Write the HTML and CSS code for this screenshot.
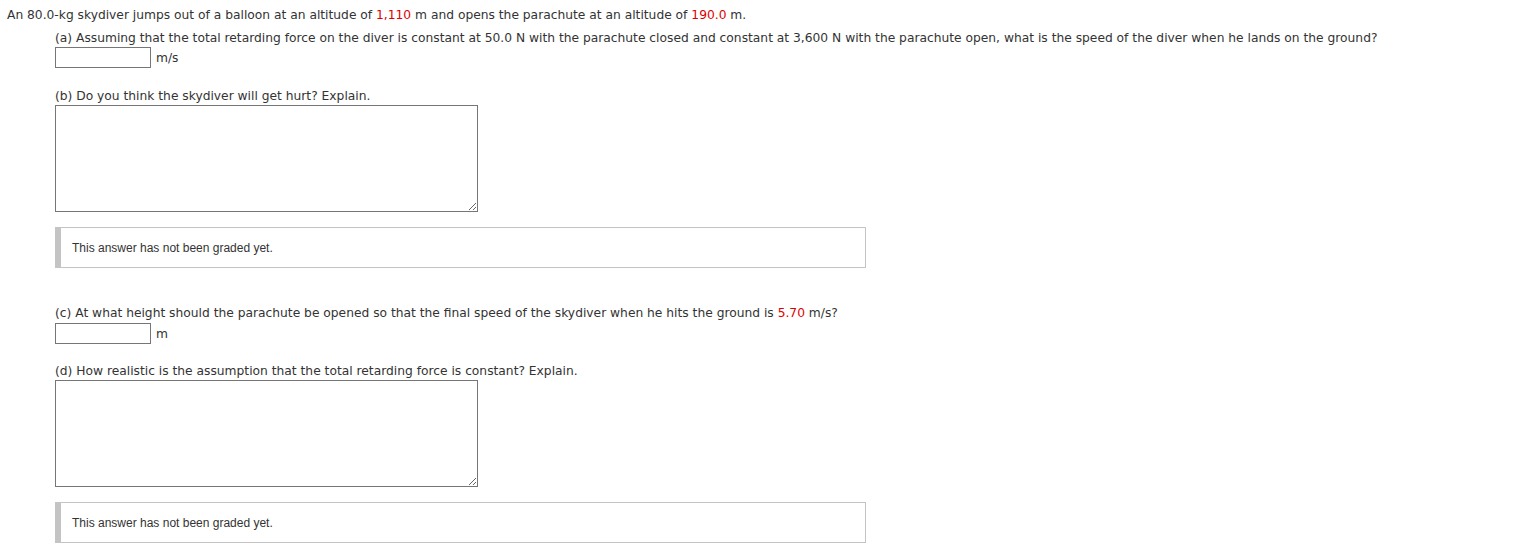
FILE: index.html
```html
<!DOCTYPE html>
<html>
<head>
<meta charset="utf-8">
<link rel="stylesheet" href="styles.css">
</head>
<body>
<div class="stem">An 80.0-kg skydiver jumps out of a balloon at an altitude of <span class="red">1,110</span> m and opens the parachute at an altitude of <span class="red">190.0</span> m.</div>
<div class="parts">
  <div class="q q-a">(a) Assuming that the total retarding force on the diver is constant at 50.0 N with the parachute closed and constant at 3,600 N with the parachute open, what is the speed of the diver when he lands on the ground?</div>
  <div class="ans"><input class="num" type="text"><span class="unit">m/s</span></div>

  <div class="q q-b">(b) Do you think the skydiver will get hurt? Explain.</div>
  <textarea class="essay"></textarea>
  <div class="grade">This answer has not been graded yet.</div>

  <div class="q q-c">(c) At what height should the parachute be opened so that the final speed of the skydiver when he hits the ground is <span class="red">5.70</span> m/s?</div>
  <div class="ans ans-c"><input class="num" type="text"><span class="unit">m</span></div>

  <div class="q q-d">(d) How realistic is the assumption that the total retarding force is constant? Explain.</div>
  <textarea class="essay"></textarea>
  <div class="grade">This answer has not been graded yet.</div>
</div>
</body>
</html>
```
FILE: styles.css
```css
html, body {
  margin: 0;
  padding: 0;
  background: #fff;
}
body {
  font-family: "DejaVu Sans", Verdana, sans-serif;
  font-size: 12.27px;
  line-height: 16px;
  color: #333;
}
.red { color: #d00; }
.stem {
  padding: 7px 0 0 7px;
}
.parts {
  margin-left: 55px;
  display: flex;
  flex-direction: column;
  align-items: flex-start;
}
.q { padding-top: 1px; }
.q-a { margin-top: 6px; }
.ans {
  display: flex;
  align-items: center;
  margin-top: 1px;
}
.ans-c { margin-top: 2px; }
.num {
  box-sizing: border-box;
  width: 96px;
  height: 21px;
  border: 1px solid #767676;
  margin: 0;
  padding: 0 3px;
  font: inherit;
}
.unit {
  margin-left: 5px;
}
.q-b { margin-top: 19px; }
.q-c { margin-top: 36px; }
.q-d { margin-top: 18px; }
.essay {
  box-sizing: border-box;
  width: 423px;
  height: 107px;
  margin: 1px 0 0 0;
  border: 1px solid #767676;
  padding: 2px;
  font: inherit;
  resize: both;
}
.grade {
  box-sizing: border-box;
  width: 811px;
  height: 41px;
  margin-top: 15px;
  border: 1px solid #c4c4c4;
  border-left: 6px solid #c4c4c4;
  padding: 0 0 0 11px;
  display: flex;
  align-items: center;
  font-family: "Liberation Sans", Arial, sans-serif;
  font-size: 12px;
  color: #333;
}
```
